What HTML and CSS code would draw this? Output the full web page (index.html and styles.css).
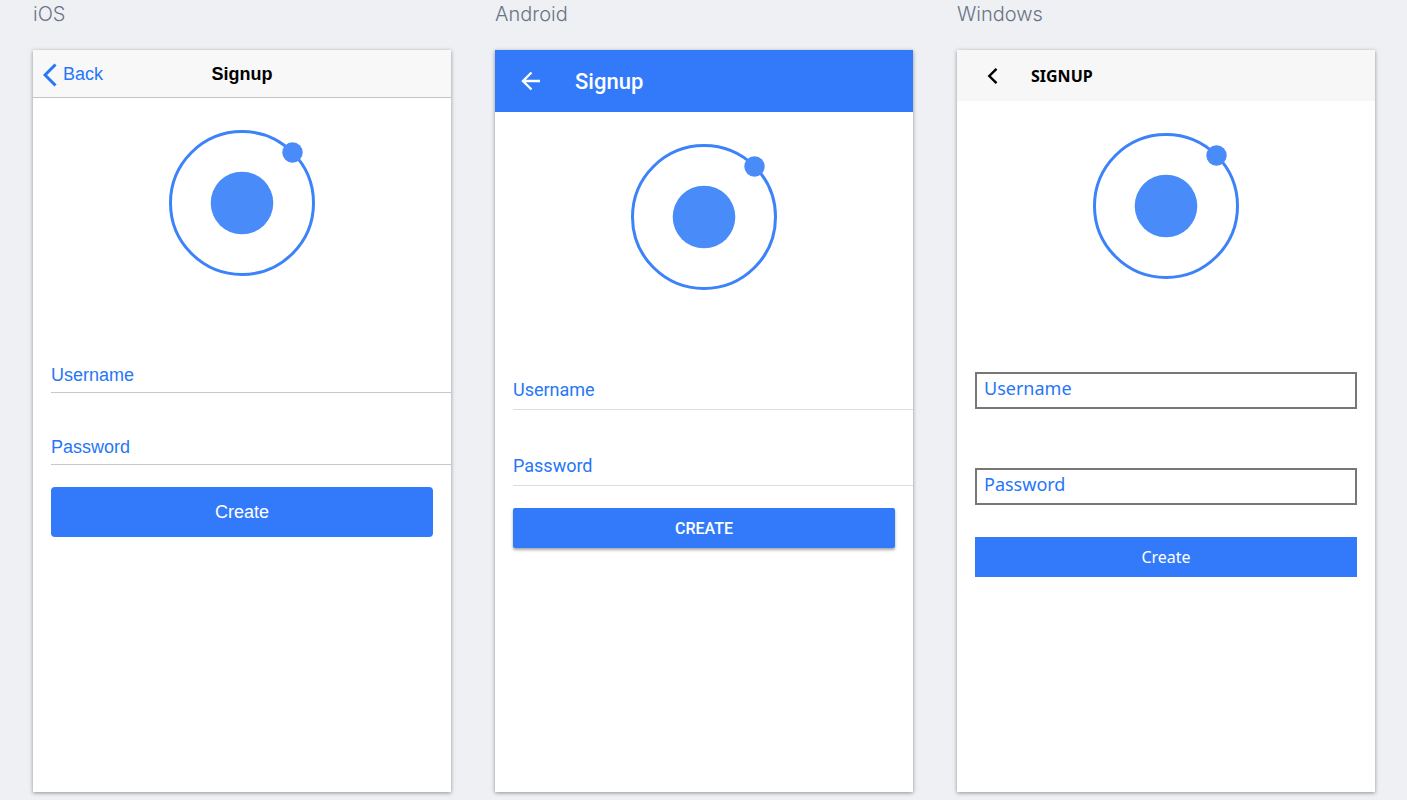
FILE: index.html
```
<!doctype html>
<html lang="en">
<head>
  <meta charset="utf-8">
  <title>Signup</title>
  <meta name="viewport" content="width=device-width, initial-scale=1">
  <link rel="stylesheet" href="styles.css">
</head>
<body>
  <main class="previews">
    <section class="preview ios">
      <h2 class="platform">iOS</h2>
      <div class="screen">
        <header class="toolbar">
          <button type="button" class="back">
            <svg width="14" height="24" viewBox="0 0 14 24" aria-hidden="true"><path d="M12.5 1.5 2 12l10.5 10.5" fill="none" stroke="currentColor" stroke-width="3"/></svg>
            Back
          </button>
          <h1>Signup</h1>
        </header>
        <svg class="logo" viewBox="0 0 146 146" aria-hidden="true">
          <circle class="ring" cx="73" cy="73" r="71.5"/>
          <circle cx="73" cy="73" r="31.3"/>
          <circle cx="123.5" cy="22.5" r="10.2"/>
        </svg>
        <form>
          <div class="field">
            <label for="ios-user">Username</label>
            <input id="ios-user" type="text">
          </div>
          <div class="field">
            <label for="ios-pass">Password</label>
            <input id="ios-pass" type="password">
          </div>
          <button type="button" class="create">Create</button>
        </form>
      </div>
    </section>

    <section class="preview android">
      <h2 class="platform">Android</h2>
      <div class="screen">
        <header class="toolbar">
          <button type="button" class="back" aria-label="Back">
            <svg width="20" height="20" viewBox="0 0 20 20" aria-hidden="true"><path d="M19 10H2.5M10.5 1.5 2 10l8.5 8.5" fill="none" stroke="currentColor" stroke-width="2.4"/></svg>
          </button>
          <h1>Signup</h1>
        </header>
        <svg class="logo" viewBox="0 0 146 146" aria-hidden="true">
          <circle class="ring" cx="73" cy="73" r="71.5"/>
          <circle cx="73" cy="73" r="31.3"/>
          <circle cx="123.5" cy="22.5" r="10.2"/>
        </svg>
        <form>
          <div class="field">
            <label for="md-user">Username</label>
            <input id="md-user" type="text">
          </div>
          <div class="field">
            <label for="md-pass">Password</label>
            <input id="md-pass" type="password">
          </div>
          <button type="button" class="create">Create</button>
        </form>
      </div>
    </section>

    <section class="preview windows">
      <h2 class="platform">Windows</h2>
      <div class="screen">
        <header class="toolbar">
          <button type="button" class="back" aria-label="Back">
            <svg width="12" height="16" viewBox="0 0 12 16" aria-hidden="true"><path d="M10.5 .8 3.3 8l7.200 7.200" fill="none" stroke="currentColor" stroke-width="2.4"/></svg>
          </button>
          <h1>Signup</h1>
        </header>
        <svg class="logo" viewBox="0 0 146 146" aria-hidden="true">
          <circle class="ring" cx="73" cy="73" r="71.5"/>
          <circle cx="73" cy="73" r="31.3"/>
          <circle cx="123.5" cy="22.5" r="10.2"/>
        </svg>
        <form>
          <div class="field">
            <label for="wp-user">Username</label>
            <input id="wp-user" type="text">
          </div>
          <div class="field">
            <label for="wp-pass">Password</label>
            <input id="wp-pass" type="password">
          </div>
          <button type="button" class="create">Create</button>
        </form>
      </div>
    </section>
  </main>
</body>
</html>
```
FILE: styles.css
```
:root {
  --bg: #eef0f4;
  --primary: #327afa;
  --label: #2676f8;
  --logo: #488bf9;
}
* { box-sizing: border-box; }
body { margin: 0; background: var(--bg); }
h1, h2 { margin: 0; }
button, input { font: inherit; }

.previews {
  display: grid;
  grid-template-columns: repeat(3, 1fr);
  gap: 44px;
  min-height: 100vh;
  padding: 0 32px 8px 33px;
}
.preview { display: flex; flex-direction: column; font-size: 18px; }
.platform {
  height: 50px;
  font: 300 20px/28px Inter, sans-serif;
  color: #6b7385;
}
.screen {
  flex: 1;
  background: #fff;
  box-shadow: 0 1px 4px rgba(0, 0, 0, 0.4);
}

/* toolbar */
.toolbar { display: flex; align-items: center; background: #f8f8f8; }
.back {
  display: flex;
  align-items: center;
  padding: 0;
  border: 0;
  background: none;
  color: inherit;
}

.logo { display: block; width: 146px; height: 146px; margin: 32px auto 44px; fill: var(--logo); }
.ring { fill: none; stroke: #3c83f9; stroke-width: 3px; }

/* label and input share one cell, the label lies over the empty input */
.field { display: grid; margin-left: 18px; align-items: end; }
.field label, .field input { grid-area: 1 / 1; }
.field label { z-index: 1; color: var(--label); line-height: 24px; pointer-events: none; justify-self: start; }
.field input {
  width: 100%;
  height: 36px;
  padding: 0;
  border: 0;
  border-bottom: 1px solid #c8c7cc;
  background: none;
  outline: none;
}
.create {
  display: block;
  width: calc(100% - 36px);
  height: 40px;
  margin: 22px 18px 0;
  padding: 0;
  border: 0;
  background: var(--primary);
  color: #fff;
}

/* iOS */
.ios { font-family: "Liberation Sans", sans-serif; }
.ios .toolbar {
  display: grid;
  grid-template-columns: 1fr auto 1fr;
  height: 48px;
  padding: 2px 10px 0;
  border-bottom: 1px solid #c4c4c6;
}
.ios .back { gap: 6px; color: var(--label); }
.ios h1 { font-size: 18px; }
.ios .logo { margin-bottom: 45px; }
.ios .field { height: 72px; }
.ios .field label { margin-bottom: 6px; }
.ios .create { height: 50px; border-radius: 4px; }

/* Android */
.android { font-family: Roboto, sans-serif; }
.android .toolbar { height: 62px; padding: 0 26px; gap: 34px; background: var(--primary); color: #fff; }
.android h1 { font-size: 22px; font-weight: 500; }
.android .field { height: 76px; }
.android .field label { margin-bottom: 8px; }
.android .field input { border-color: #dedede; }
.android .create {
  border-radius: 2px;
  box-shadow: 0 2px 3px rgba(0, 0, 0, 0.35);
  font-size: 16px;
  font-weight: 500;
  text-transform: uppercase;
}

/* Windows */
.windows { font-family: "Noto Sans", sans-serif; }
.windows .toolbar { height: 51px; padding: 0 29px; gap: 33px; background: #f7f7f7; }
.windows h1 { font-size: 16px; font-weight: 700; text-transform: uppercase; }
.windows .field { height: 96px; margin-right: 18px; padding-bottom: 10px; }
.windows .field label { margin: 0 0 9px 9px; }
.windows .field input { height: 37px; border: 2px solid #777; }
.windows .create { font-size: 16px; }
```
